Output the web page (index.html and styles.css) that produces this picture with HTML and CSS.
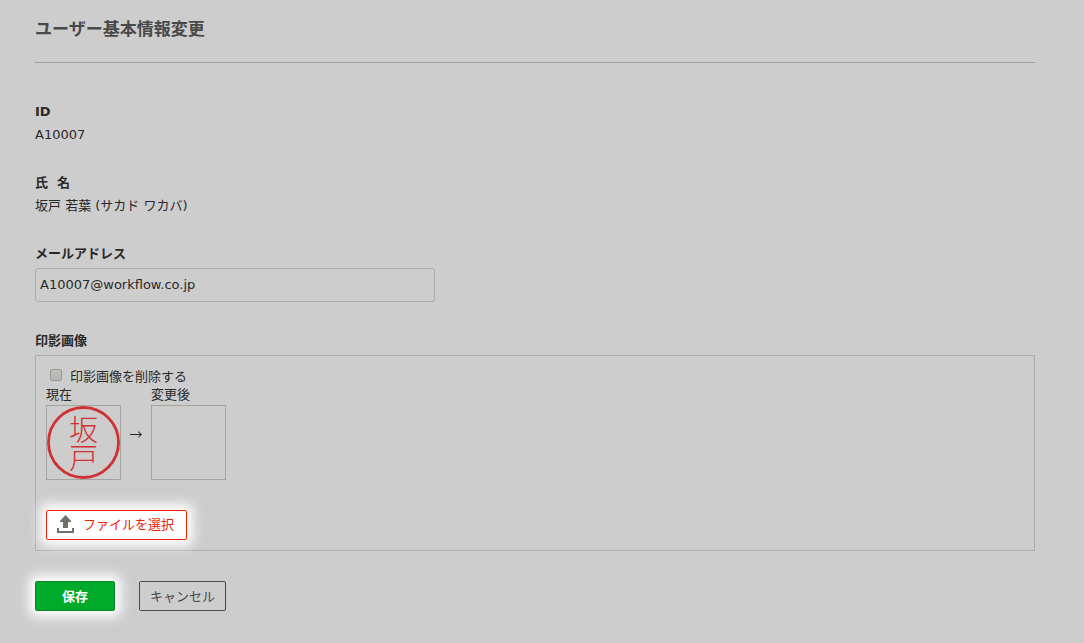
FILE: index.html
```html
<!DOCTYPE html>
<html lang="ja">
<head>
<meta charset="utf-8">
<meta name="viewport" content="width=device-width, initial-scale=1">
<title>ユーザー基本情報変更</title>
<link rel="stylesheet" href="styles.css">
</head>
<body>
<main class="page">
  <h1 class="title">ユーザー基本情報変更</h1>
  <form class="form">
    <div class="field">
      <div class="field-label">ID</div>
      <div>A10007</div>
    </div>
    <div class="field">
      <div class="field-label name-label"><span>氏</span><span>名</span></div>
      <div>坂戸 若葉 (サカド ワカバ)</div>
    </div>
    <div class="field">
      <label class="field-label" for="email">メールアドレス</label>
      <input class="text-input" id="email" type="email" value="A10007@workflow.co.jp">
    </div>
    <div class="field">
      <div class="field-label" id="seal-label">印影画像</div>
      <div class="seal-box" role="group" aria-labelledby="seal-label">
        <div class="check-row">
          <input class="check" id="delete-seal" type="checkbox">
          <label for="delete-seal">印影画像を削除する</label>
        </div>
        <div class="compare">
          <div class="preview">
            <div>現在</div>
            <div class="frame">
              <svg class="seal" viewBox="0 0 73 73" role="img" aria-label="坂戸">
                <circle cx="36.5" cy="36.5" r="35" fill="none" stroke="#d03133" stroke-width="2.8"/>
                <text class="seal-text" x="36.5" y="35">坂</text>
                <text class="seal-text" x="36.5" y="63">戸</text>
              </svg>
            </div>
          </div>
          <span class="arrow">→</span>
          <div class="preview">
            <div>変更後</div>
            <div class="frame"></div>
          </div>
        </div>
        <button class="button button-file" type="button">
          <svg class="upload" viewBox="0 0 17 18" aria-hidden="true">
            <path d="M8.5 0L14 6V7H11V13H6V7H3V6ZM0 13H2V16H15V13H17V18H0Z" fill="#706f68"/>
          </svg>
          <span>ファイルを選択</span>
        </button>
      </div>
    </div>
    <div class="actions">
      <button class="button button-save" type="submit">保存</button>
      <button class="button button-cancel" type="button">キャンセル</button>
    </div>
  </form>
</main>
</body>
</html>
```
FILE: styles.css
```css
* {
  box-sizing: border-box;
}

body {
  margin: 0;
  background: #cdcdcd;
  color: #292929;
  font-family: "DejaVu Sans", "Noto Sans CJK JP", sans-serif;
  font-size: 13px;
  line-height: 23px;
}

.page {
  padding: 16px 49px 32px 35px;
}

.title {
  margin: 0 0 37px;
  padding-bottom: 22px;
  border-bottom: 1px solid #a0a0a0;
  color: #494949;
  font-family: "Noto Sans CJK JP", sans-serif;
  font-size: 17px;
  line-height: 24px;
}

.form {
  display: flex;
  flex-direction: column;
  gap: 25px;
}

.field-label {
  display: block;
  font-weight: bold;
}

.name-label {
  display: flex;
  gap: 9px;
}

.text-input {
  display: block;
  width: 400px;
  max-width: 100%;
  height: 34px;
  margin: 3px 0 2px;
  padding: 0 4px 2px;
  border: 1px solid #adadad;
  border-radius: 3px;
  background: transparent;
  color: inherit;
  font: inherit;
}

.seal-box {
  margin-top: 3px;
  padding: 12px 10px 10px;
  border: 1px solid #adadad;
  line-height: 18px;
}

.check-row {
  display: flex;
  align-items: center;
  gap: 8px;
  padding-left: 4px;
}

.check {
  appearance: none;
  width: 12px;
  height: 12px;
  margin: 0 0 4px;
  border: 1px solid #999894;
  border-radius: 2px;
  background: linear-gradient(#c0bfbc, #b5b4b0);
}

.check:checked {
  background: #494949;
}

.compare {
  display: flex;
  margin-bottom: 30px;
}

.preview {
  width: 75px;
}

.frame {
  height: 75px;
  margin-top: 1px;
  border: 1px solid #a5a49f;
}

.seal {
  display: block;
  width: 73px;
  height: 73px;
  overflow: visible;
}

.seal-text {
  fill: #d03133;
  font-family: "Noto Sans CJK JP", sans-serif;
  font-size: 29px;
  font-weight: 300;
  text-anchor: middle;
}

.arrow {
  width: 30px;
  padding-top: 39px;
  font-family: "Noto Sans CJK JP", sans-serif;
  text-align: center;
}

.button {
  display: flex;
  align-items: center;
  justify-content: center;
  height: 30px;
  padding: 0 10px;
  border: 1px solid;
  border-radius: 2px;
  font: inherit;
  cursor: pointer;
}

.button-file {
  gap: 9px;
  padding: 0 12px 0 10px;
  border-color: #f22000;
  background: #fff;
  box-shadow: 0 0 12px 6px #fff;
  color: #f22000;
}

.upload {
  width: 17px;
  height: 18px;
  margin-bottom: 2px;
}

.actions {
  display: flex;
  gap: 24px;
  margin-top: 5px;
}

.button-save {
  width: 80px;
  border-color: #078522;
  background: #00aa2b;
  box-shadow: 0 0 12px 6px #fff;
  color: #fff;
  font-weight: bold;
}

.button-cancel {
  border-color: #494949;
  background: transparent;
  color: #494949;
}
```
